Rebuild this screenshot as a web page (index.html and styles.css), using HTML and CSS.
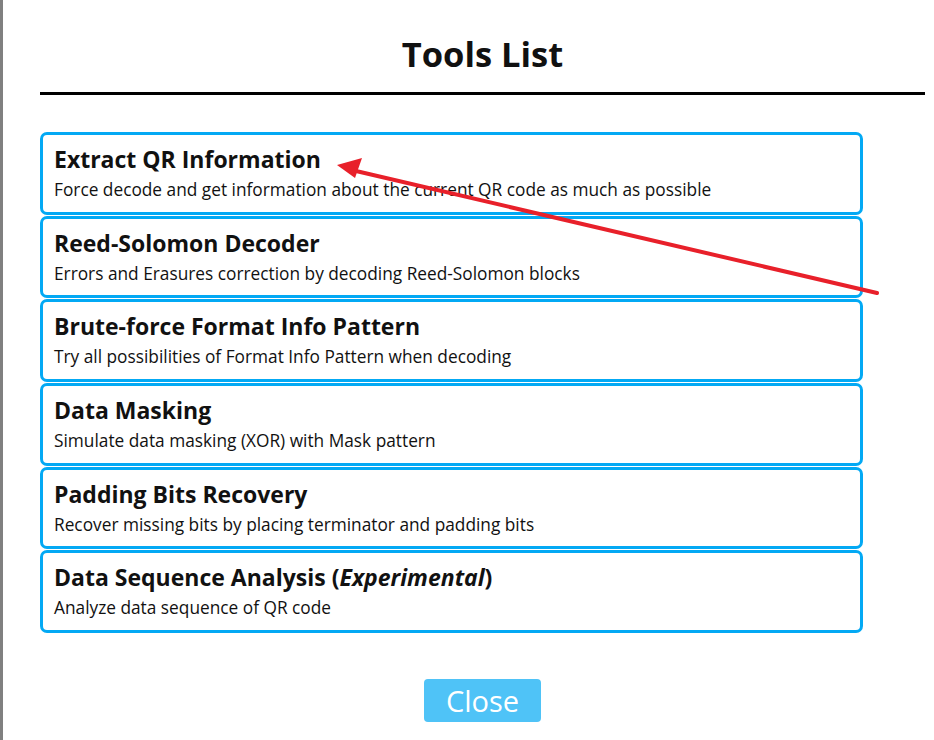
FILE: index.html
```html
<!DOCTYPE html>
<html>
<head>
<meta charset="utf-8">
<link rel="stylesheet" href="styles.css">
</head>
<body>
<div class="edge"></div>
<div class="modal">
  <h1 class="heading">Tools List</h1>
  <ul class="tools">
    <li class="tool">
      <div class="tool-title">Extract QR Information</div>
      <div class="tool-desc">Force decode and get information about the current QR code as much as possible</div>
    </li>
    <li class="tool">
      <div class="tool-title">Reed-Solomon Decoder</div>
      <div class="tool-desc">Errors and Erasures correction by decoding Reed-Solomon blocks</div>
    </li>
    <li class="tool">
      <div class="tool-title">Brute-force Format Info Pattern</div>
      <div class="tool-desc">Try all possibilities of Format Info Pattern when decoding</div>
    </li>
    <li class="tool">
      <div class="tool-title">Data Masking</div>
      <div class="tool-desc">Simulate data masking (XOR) with Mask pattern</div>
    </li>
    <li class="tool">
      <div class="tool-title">Padding Bits Recovery</div>
      <div class="tool-desc">Recover missing bits by placing terminator and padding bits</div>
    </li>
    <li class="tool">
      <div class="tool-title">Data Sequence Analysis (<em>Experimental</em>)</div>
      <div class="tool-desc">Analyze data sequence of QR code</div>
    </li>
  </ul>
  <div class="actions">
    <button class="close-btn">Close</button>
  </div>
</div>
<svg class="annotation" width="934" height="740" viewBox="0 0 934 740">
  <line x1="877" y1="293" x2="356" y2="171" stroke="#e8202a" stroke-width="4" stroke-linecap="round"/>
  <polygon points="337,165 362,158 355,178" fill="#e8202a"/>
</svg>
</body>
</html>
```
FILE: styles.css
```css
html, body {
  margin: 0;
  padding: 0;
  background: #fff;
}
body {
  width: 934px;
  height: 740px;
  overflow: hidden;
  position: relative;
  font-family: "Open Sans", "Noto Sans", sans-serif;
  color: #111;
  display: flex;
}
.edge {
  width: 3px;
  background: #808080;
  flex: none;
}
.modal {
  margin-left: 37px;
  width: 885px;
  display: flex;
  flex-direction: column;
}
.heading {
  margin: 0;
  border-bottom: 3px solid #000;
  text-align: center;
  font-size: 34.5px;
  font-weight: 700;
  line-height: 46px;
  height: 46px;
  padding-top: 31px;
  padding-bottom: 15px;
}
.tools {
  list-style: none;
  margin: 37px 0 0 0;
  padding: 0;
  width: 823px;
  display: flex;
  flex-direction: column;
  gap: 1px;
}
.tool {
  box-sizing: border-box;
  height: 82.7px;
  border: 3px solid #03a9f4;
  border-radius: 7px;
  padding: 10px 11px 0 11px;
}
.tool-title {
  font-size: 23px;
  font-weight: 700;
  line-height: 28px;
}
.tool-desc {
  font-size: 17.3px;
  line-height: 24px;
  margin-top: 5px;
}
.actions {
  display: flex;
  justify-content: center;
  margin-top: 46px;
}
.close-btn {
  width: 117px;
  height: 43px;
  border: none;
  border-radius: 4px;
  background: #4fc3f7;
  color: #fff;
  font-family: "Open Sans", "Noto Sans", sans-serif;
  font-size: 29px;
  padding: 0;
  line-height: 43px;
}
.annotation {
  position: absolute;
  left: 0;
  top: 0;
  pointer-events: none;
}
```
